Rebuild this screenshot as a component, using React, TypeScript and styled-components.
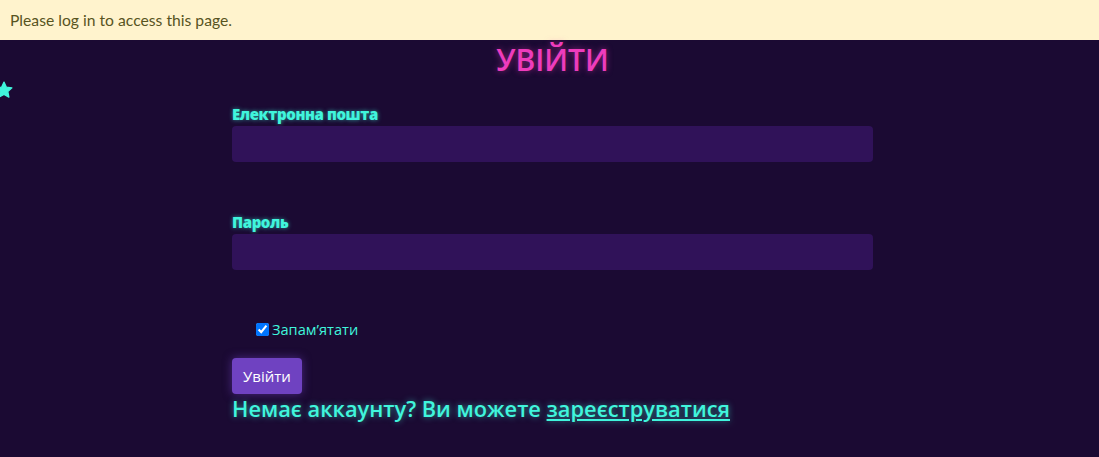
import styled, { createGlobalStyle } from 'styled-components';

const GlobalStyle = createGlobalStyle`
  html, body {
    margin: 0;
    padding: 0;
    background: #1b0a33;
  }
  * {
    box-sizing: border-box;
  }
`;

const Page = styled.div`
  width: 100%;
  min-height: 457px;
  background-color: #1b0a33;
  position: relative;
  overflow: hidden;
`;

const Alert = styled.div`
  display: flex;
  align-items: center;
  height: 40px;
  padding-left: 10px;
  background-color: #fff3cd;
  color: #58541f;
  font-family: Lato, 'Open Sans', sans-serif;
  font-size: 15.7px;
`;

const Star = styled.svg`
  position: absolute;
  left: -6px;
  top: 80px;
  width: 20px;
  height: 20px;
`;

const Form = styled.form`
  display: flex;
  flex-direction: column;
  width: 641px;
  margin-left: 232px;
`;

const Title = styled.h1`
  margin: 0;
  height: 40px;
  line-height: 40px;
  text-align: center;
  font-family: 'Open Sans', sans-serif;
  font-weight: 600;
  font-size: 30px;
  color: #ee3cbd;
  text-shadow: 0 0 6px rgba(238, 60, 189, 0.5);
`;

const Group = styled.div<{ $top: number }>`
  display: flex;
  flex-direction: column;
  gap: 2px;
  margin-top: ${(p) => p.$top}px;
`;

const Label = styled.label`
  height: 20px;
  line-height: 20px;
  font-family: 'Open Sans', sans-serif;
  font-weight: 800;
  font-size: 15px;
  letter-spacing: -0.4px;
  color: #40f5dc;
  text-shadow: 0 0 4px rgba(64, 245, 220, 0.6);
`;

const Input = styled.input`
  height: 36px;
  width: 100%;
  border: none;
  border-radius: 4px;
  background-color: #301259;
  outline: none;
`;

const CheckRow = styled.label`
  display: flex;
  align-items: center;
  gap: 3px;
  height: 18px;
  margin-top: 50px;
  padding-left: 24px;
  font-family: 'Open Sans', sans-serif;
  font-size: 14.6px;
  color: #40f5dc;
  input {
    margin: 0;
    width: 13px;
    height: 13px;
  }
`;

const Button = styled.button`
  align-self: flex-start;
  height: 36px;
  margin-top: 20px;
  padding: 0 11px;
  border: none;
  border-radius: 4px;
  background-color: #6f42c1;
  color: #ffffff;
  font-family: 'Open Sans', sans-serif;
  font-weight: 500;
  font-size: 15px;
  box-shadow: 0 0 10px rgba(111, 66, 193, 0.55);
`;

const Footer = styled.p`
  margin: 0;
  line-height: 30px;
  font-family: 'Open Sans', sans-serif;
  font-weight: 600;
  font-size: 21.8px;
  color: #40f5dc;
  text-shadow: 0 0 6px rgba(64, 245, 220, 0.55);
  a {
    color: inherit;
    text-decoration: underline;
  }
`;

const App = () => {
  return (
    <Page>
      <GlobalStyle />
      <Alert>Please log in to access this page.</Alert>
      <Star viewBox="0 0 24 24">
        <path
          d="M12 2.5l2.9 6.1 6.6.8-4.9 4.6 1.3 6.6L12 17.3l-5.9 3.3 1.3-6.6-4.9-4.6 6.6-.8z"
          fill="#40f5dc"
          stroke="#40f5dc"
          strokeWidth="1.5"
          strokeLinejoin="round"
        />
      </Star>
      <Form onSubmit={(e) => e.preventDefault()}>
        <Title>УВІЙТИ</Title>
        <Group $top={24}>
          <Label>Електронна пошта</Label>
          <Input type="email" />
        </Group>
        <Group $top={50}>
          <Label>Пароль</Label>
          <Input type="password" />
        </Group>
        <CheckRow>
          <input type="checkbox" defaultChecked />
          Запам’ятати
        </CheckRow>
        <Button type="submit">Увійти</Button>
        <Footer>
          Немає аккаунту? Ви можете <a href="#">зареєструватися</a>
        </Footer>
      </Form>
    </Page>
  );
};

export default App;
